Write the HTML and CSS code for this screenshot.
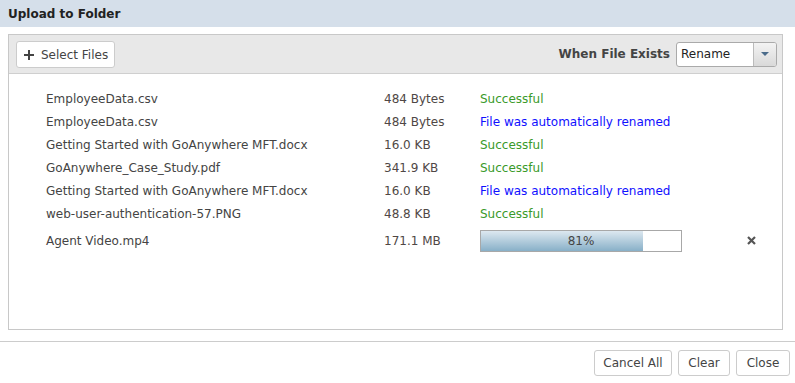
FILE: index.html
```html
<!DOCTYPE html>
<html>
<head>
<meta charset="utf-8">
<link rel="stylesheet" href="styles.css">
</head>
<body>
<div class="dialog">
  <div class="titlebar">Upload to Folder</div>
  <div class="content">
    <div class="panel">
      <div class="toolbar">
        <button class="btn select-btn">
          <svg width="10" height="10" viewBox="0 0 10 10" class="plus"><path d="M4 0h2v4h4v2H6v4H4V6H0V4h4z" fill="#444"/></svg>
          <span>Select Files</span>
        </button>
        <div class="exists">
          <span class="exists-label">When File Exists</span>
          <div class="combo">
            <span class="combo-value">Rename</span>
            <span class="combo-arrow"><svg width="8" height="4" viewBox="0 0 8 4"><path d="M0 0h8L4 4z" fill="#4a6b8a"/></svg></span>
          </div>
        </div>
      </div>
      <div class="files">
        <div class="row"><span class="name">EmployeeData.csv</span><span class="size">484 Bytes</span><span class="status ok">Successful</span></div>
        <div class="row"><span class="name">EmployeeData.csv</span><span class="size">484 Bytes</span><span class="status renamed">File was automatically renamed</span></div>
        <div class="row"><span class="name">Getting Started with GoAnywhere MFT.docx</span><span class="size">16.0 KB</span><span class="status ok">Successful</span></div>
        <div class="row"><span class="name">GoAnywhere_Case_Study.pdf</span><span class="size">341.9 KB</span><span class="status ok">Successful</span></div>
        <div class="row"><span class="name">Getting Started with GoAnywhere MFT.docx</span><span class="size">16.0 KB</span><span class="status renamed">File was automatically renamed</span></div>
        <div class="row"><span class="name">web-user-authentication-57.PNG</span><span class="size">48.8 KB</span><span class="status ok">Successful</span></div>
        <div class="row row-progress"><span class="name">Agent Video.mp4</span><span class="size">171.1 MB</span>
          <span class="status"><span class="progress"><span class="fill" style="width:81%"></span><span class="pct">81%</span></span></span>
          <span class="cancel"><svg width="9" height="9" viewBox="0 0 9 9"><path d="M1 1L8 8M8 1L1 8" stroke="#555" stroke-width="2.2"/></svg></span>
        </div>
      </div>
    </div>
  </div>
  <div class="footer">
    <button class="btn b-cancel">Cancel All</button>
    <button class="btn b-clear">Clear</button>
    <button class="btn b-close">Close</button>
  </div>
</div>
</body>
</html>
```
FILE: styles.css
```css
* { box-sizing: border-box; }
html, body { margin: 0; padding: 0; background: #fff; }
body { font-family: "DejaVu Sans", Verdana, sans-serif; font-size: 12px; color: #444; width: 795px; height: 383px; overflow: hidden; }
.dialog { display: flex; flex-direction: column; height: 383px; }
.titlebar { height: 27px; background: #d5dfea; font-weight: bold; font-size: 12px; color: #222; padding: 0 8px; display: flex; align-items: center; }
.content { padding: 7px 12px 0 8px; }
.panel { border: 1px solid #c8c8c8; height: 296px; display: flex; flex-direction: column; }
.toolbar { height: 39px; background: #e8e8e8; border-bottom: 1px solid #cfcfcf; display: flex; align-items: center; justify-content: space-between; padding: 0 5px 0 7px; }
.btn { font-family: inherit; font-size: 12px; color: #444; background: #fff; border: 1px solid #ccc; border-radius: 3px; height: 26px; padding: 0; display: inline-flex; align-items: center; justify-content: center; gap: 6px; white-space: nowrap; }
.select-btn { height: 27px; width: 99px; padding: 0 0 0 7px; justify-content: flex-start; gap: 7px; margin-top: 1px; }
.plus { display: block; }
.exists { display: flex; align-items: center; gap: 6px; }
.exists-label { font-weight: bold; color: #444; font-size: 12px; }
.combo { width: 101px; height: 25px; border: 1px solid #aaa; border-radius: 3px; display: flex; background: #fff; overflow: hidden; }
.combo-value { flex: 1; padding-left: 4px; display: flex; align-items: center; color: #222; }
.combo-arrow { width: 23px; background: linear-gradient(#f3f3f3, #d9d9d9); border-left: 1px solid #bbb; display: flex; align-items: center; justify-content: center; }
.files { padding: 13px 0 0 37px; display: flex; flex-direction: column; }
.row { height: 23px; display: flex; align-items: center; }
.row-progress { height: 31px; }
.name { width: 338px; }
.size { width: 96px; color: #4f4745; }
.status { width: 265px; }
.ok { color: #3a9a2a; }
.renamed { color: #1010ff; }
.progress { position: relative; display: block; width: 202px; height: 22px; border: 1px solid #a8a8a8; background: #fff; }
.fill { position: absolute; left: 0; top: 0; bottom: 0; background: linear-gradient(#dde8f0, #88b0c8); }
.pct { position: relative; display: flex; justify-content: center; align-items: center; height: 100%; color: #444; }
.cancel { display: flex; align-items: center; margin-left: 2px; }
.footer { margin-top: 11px; border-top: 1px solid #ccc; display: flex; justify-content: flex-end; gap: 6px; padding: 8px 5px 0 0; }
.footer .btn { height: 26px; }
.b-cancel { width: 78px; }
.b-clear { width: 52px; }
.b-close { width: 54px; }
```
